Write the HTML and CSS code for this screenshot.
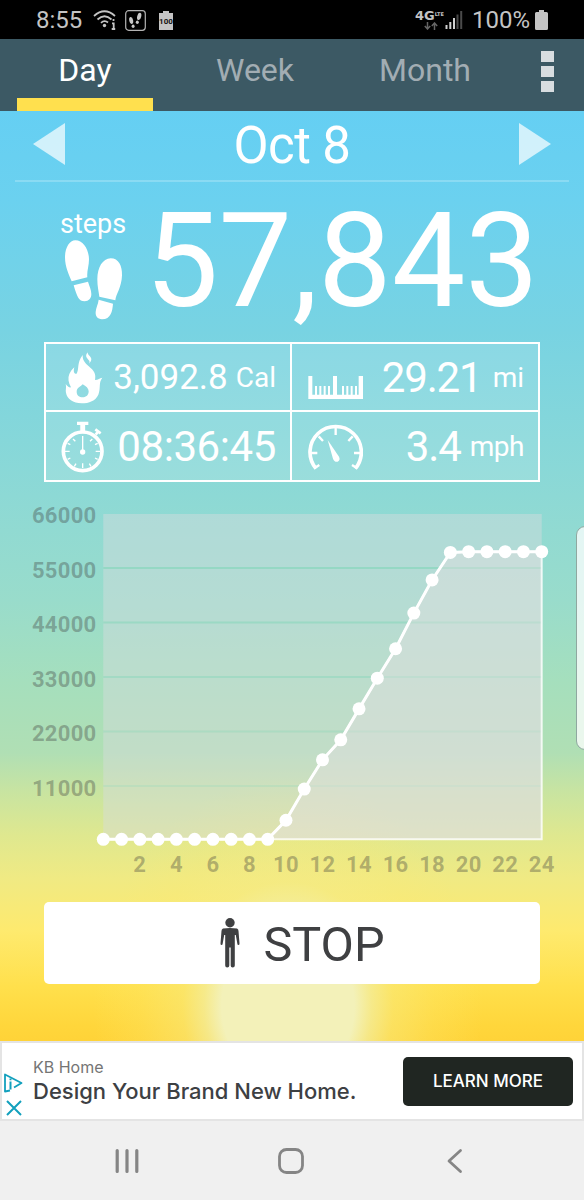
FILE: index.html
```html
<!DOCTYPE html>
<html lang="en">
<head>
    <meta charset="UTF-8">
    <meta name="viewport" content="width=device-width, initial-scale=1.0">
    <title>Pedometer</title>
    <link rel="stylesheet" href="styles.css">
</head>
<body>
    <!-- Phone status bar -->
    <div id="status-bar">
        <span class="clock">8:55</span>
        <svg class="wifi" width="24" height="22" viewBox="0 0 24 22" fill="none" stroke="#c4c4c4" stroke-width="1.8">
            <path d="M1 7 Q11.500 -2.500 22 7M4.500 10.500 Q11.500 4 18.500 10.500M8 13.800 Q11.500 10.500 15 13.500"/>
            <circle cx="11.500" cy="16.500" r="1.700" fill="#c4c4c4" stroke="none"/>
            <path d="M20.500 10v2M19 14.300h1.700v5.500M18.700 20h3.500"/>
        </svg>
        <svg class="steps-app" width="21" height="21" viewBox="0 0 21 21">
            <rect x=".7" y=".7" width="19.600" height="19.600" rx="3" fill="none" stroke="#b4b4b4" stroke-width="1.200"/>
            <g fill="#c8c8c8">
                <ellipse cx="6.200" cy="10.500" rx="1.900" ry="3.600" transform="rotate(-12 6.200 10.500)"/>
                <ellipse cx="8.100" cy="16.200" rx="1.500" ry="1.700"/>
                <ellipse cx="14.200" cy="6.400" rx="2" ry="3.700" transform="rotate(14 14.200 6.400)"/>
                <ellipse cx="12.300" cy="12.300" rx="1.500" ry="1.700"/>
            </g>
        </svg>
        <div class="battery-full">100</div>
        <div class="network">
            <span class="lte">4G<small>LTE</small></span>
            <svg width="14" height="8" viewBox="0 0 14 8" fill="none" stroke="#666" stroke-width="1.500">
                <path d="M3.500 0v7M.8 4l2.700 3 2.700-3M10.500 8V1M7.800 4l2.700-3 2.700 3"/>
            </svg>
        </div>
        <svg class="signal" width="18" height="18" viewBox="0 0 18 18">
            <path d="M.5 14h2v4h-2zM4.300 11h2v7h-2zM8 7h2v11H8z" fill="#d0d0d0"/>
            <path d="M11.500 3.500h2V18h-2zM15.200 0h2v18h-2z" fill="#4a4a4a"/>
        </svg>
        <span class="percent">100%</span>
        <svg class="battery" width="13" height="20" viewBox="0 0 13 20">
            <path d="M4 0h5v2h2.500q1.500 0 1.500 1.500v15Q13 20 11.500 20h-10Q0 20 0 18.500v-15Q0 2 1.500 2H4z" fill="#c4c4c4"/>
        </svg>
    </div>

    <!-- Tabs -->
    <div id="tabs">
        <div class="tab active">Day</div>
        <div class="tab">Week</div>
        <div class="tab">Month</div>
        <div class="menu"><i></i><i></i><i></i></div>
    </div>

    <div id="main">
        <div id="date-row">
            <svg width="32" height="42" viewBox="0 0 32 42"><path d="M32 0v42L0 21z"/></svg>
            <span>Oct 8</span>
            <svg width="32" height="42" viewBox="0 0 32 42"><path d="M0 0v42l32-21z"/></svg>
        </div>

        <div id="steps">
            <div class="steps-label">
                <span>steps</span>
                <svg width="66" height="84" viewBox="0 0 198 252" fill="#fff">
                    <path d="M35 130C28 112 15 88 15 58 15 30 28 7 46 7 70 7 87 36 87 64 87 84 80 100 82 118Z"/>
                    <path d="M41 142L84 131C88 145 94 155 94 168 94 182 86 189 74 190 56 190 52 178 41 142Z"/>
                    <path d="M118 176C116 160 112 145 112 124 112 88 128 62 152 61 176 61 187 84 186 112 185 148 168 168 166 187Z"/>
                    <path d="M116 185L159 197C157 220 153 243 126 244 112 243 106 234 107 222 108 208 114 200 116 185Z"/>
                </svg>
            </div>
            <div class="count">57,843</div>
        </div>

        <div id="stats">
            <div class="stat">
                <svg width="48" height="54" viewBox="0 0 144 162" fill="#fff">
                    <path fill-rule="evenodd" d="M14 102C20 110 24 113 30 112 22 98 20 84 25 72 29 64 32 60 40 52 36 66 40 72 46 72 56 58 46 40 65 15 64 34 76 42 88 53 104 66 104 78 102 90 112 90 116 84 124 83 112 98 120 114 112 134 104 152 84 160 62 160 36 159 18 146 15 128 13 118 17 114 14 102ZM65 103C60 110 47 113 47 125 47 136 55 142 65 142 76 142 83 135 83 124 83 115 75 108 65 103Z"/>
                    <path d="M80 7C72 17 76 23 82 29 87 33 86 37 84 41 95 30 91 23 86 18 81 14 80 11 80 7Z"/>
                </svg>
                <span class="value small">3,092.8</span><span class="unit">Cal</span>
            </div>
            <div class="stat">
                <svg class="ruler" width="56" height="26" viewBox="0 0 168 78" fill="#fff">
                    <path d="M4 3h12v56h62V3h12v56h65V3h13v69H4z"/>
                    <path d="M24 33h6v28h-6zM37 33h6v28h-6zM50 33h6v28h-6zM63 33h6v28h-6zM105 33h6v28h-6zM118 33h6v28h-6zM131 33h6v28h-6zM144 33h6v28h-6z"/>
                </svg>
                <span class="value narrow">29.21</span><span class="unit">mi</span>
            </div>
            <div class="stat">
                <svg width="48" height="56" viewBox="0 0 144 168" fill="none" stroke="#fff">
                    <circle cx="65" cy="100" r="58" stroke-width="11"/>
                    <path d="M48 16h34M65 18v24" stroke-width="10"/>
                    <path d="M58 20h14v20H58z" fill="#fff"/>
                    <path d="M104 50l8-10M103 34l16 12" stroke-width="8"/>
                    <path d="M65 54v44" stroke-width="4"/>
                    <circle cx="65" cy="102" r="8" fill="#fff" stroke="none"/>
                    <path d="M12 100h14M104 100h14M65 136v14M36 63l7 7M94 63l-7 7M20 76l8 4M110 76l-8 4M20 124l8-4M110 124l-8-4M40 145l5-8M90 145l-5-8" stroke-width="4"/>
                </svg>
                <span class="value">08:36:45</span>
            </div>
            <div class="stat">
                <svg class="gauge" width="56" height="48" viewBox="0 0 168 144" fill="none" stroke="#fff">
                    <path d="M27 134A77 77 0 1 1 145 134" stroke-width="11"/>
                    <path d="M10 87h21M162 87h-21M86 12v21M35 37l13 14M137 37l-13 14M23 132l14-9M149 132l-14-9" stroke-width="7"/>
                    <path d="M62 48L96 98Q101 108 92 113 82 115 78 104Z" fill="#fff" stroke="none"/>
                </svg>
                <span class="value narrow">3.4</span><span class="unit">mph</span>
            </div>
        </div>

        <svg id="chart" width="584" height="420" viewBox="0 0 584 420"></svg>

        <button id="stop">
            <svg width="22" height="50" viewBox="0 0 22 50" fill="#3f4042">
                <circle cx="11" cy="4.800" r="4.700"/>
                <path d="M4 10.500Q11 9.500 18 10.500 19.500 11 19.500 13L20.500 25.500Q20.500 27 19.500 27 18.400 27 18.300 25.500L16.800 17H15.800V47.500Q15.800 49.500 13.700 49.500 11.700 49.500 11.700 47.500V29.500H10.300V47.500Q10.300 49.500 8.200 49.500 6.200 49.500 6.200 47.500V17H5.200L3.700 25.500Q3.600 27 2.500 27 1.500 27 1.500 25.500L2.500 13Q2.500 11 4 10.500Z"/>
            </svg>
            <span>STOP</span>
        </button>

        <div id="edge-handle"></div>
    </div>

    <!-- Ad banner -->
    <div id="ad">
        <div class="ad-icons">
            <svg width="20" height="20" viewBox="0 0 20 20" fill="none" stroke="#12a0bd" stroke-width="1.800" stroke-linejoin="round">
                <path d="M7 17.500L2 18.500V1.500L18.500 10 11 14.500"/>
                <path d="M7.500 8.500v8M7.500 5.500v1.800" stroke-width="2"/>
            </svg>
            <svg width="20" height="16" viewBox="0 0 20 16" fill="none" stroke="#12a0bd" stroke-width="2">
                <path d="M3 1l14 14M17 1L3 15"/>
            </svg>
        </div>
        <div class="ad-text">
            <div class="advertiser">KB Home</div>
            <div class="headline">Design Your Brand New Home.</div>
        </div>
        <button class="learn-more">LEARN MORE</button>
    </div>

    <!-- Android navigation -->
    <div id="nav-bar">
        <svg width="26" height="26" viewBox="0 0 26 26" stroke="#858585" stroke-width="3.200" stroke-linecap="round">
            <path d="M3.200 2.500v21M13 2.500v21M22.800 2.500v21"/>
        </svg>
        <svg width="26" height="26" viewBox="0 0 26 26" fill="none" stroke="#858585" stroke-width="2.800">
            <rect x="1.500" y="1.500" width="23" height="23" rx="7"/>
        </svg>
        <svg width="26" height="26" viewBox="0 0 26 26" fill="none" stroke="#858585" stroke-width="2.800" stroke-linecap="round" stroke-linejoin="round">
            <path d="M18.500 2.500L7 13l11.500 10.500"/>
        </svg>
    </div>

    <script src="chart.js"></script>
</body>
</html>
```
FILE: styles.css
```css
/* General styles */
body {
    margin: 0;
    width: 584px;
    height: 1200px;
    overflow: hidden;
    font-family: Roboto, sans-serif;
    color: #fff;
    display: flex;
    flex-direction: column;
}

svg {
    display: block;
    flex-shrink: 0;
}

button {
    border: none;
    font-family: inherit;
    padding: 0;
    cursor: pointer;
}

/* Status bar */
#status-bar {
    height: 39px;
    background-color: #000;
    display: flex;
    align-items: center;
    color: #c4c4c4;
    font-size: 24px;
    box-sizing: border-box;
    padding: 1px 0 0 36px;
}

.clock {
    width: 57px;
}

.steps-app {
    margin-left: 8px;
}

.battery-full {
    width: 14px;
    height: 19px;
    margin: 1px 0 0 13px;
    background:
        linear-gradient(#c4c4c4, #c4c4c4) 4px 0 / 6px 2px no-repeat,
        linear-gradient(#c4c4c4, #c4c4c4) 0 2px / 14px 19px no-repeat;
    color: #111;
    font-size: 8px;
    font-weight: bold;
    line-height: 22px;
    display: flex;
    justify-content: center;
}

.network {
    margin-left: 243px;
    width: 27px;
    display: flex;
    flex-direction: column;
    align-items: center;
}

.network svg {
    margin-left: 2px;
}

.lte {
    display: flex;
    font-family: "DejaVu Sans", sans-serif;
    font-size: 13px;
    font-weight: bold;
    line-height: 11px;
    margin-bottom: 1px;
}

.lte small {
    font-size: 5px;
    line-height: 9px;
}

.signal {
    margin-left: 2px;
}

.percent {
    width: 63px;
    margin-left: 9px;
}

/* Tabs */
#tabs {
    height: 72px;
    background-color: #3c5964;
    display: flex;
    font-size: 32px;
    line-height: 62px;
    color: #a2adb3;
}

.tab {
    width: 136px;
    margin: 0 17px;
    height: 59px;
    text-align: center;
    border-bottom: 13px solid transparent;
}

.active {
    color: #fff;
    border-color: #ffe04e;
}

.menu {
    display: flex;
    flex-direction: column;
    gap: 4px;
    margin: 12px 0 0 31px;
}

.menu i {
    width: 13px;
    height: 11px;
    background-color: #d8dde0;
}

/* Sky background with the sun at the bottom */
#main {
    position: relative;
    height: 930px;
    background:
        radial-gradient(195px 230px at 288px 895px, #f3f1b9 0, #f3f1b9 34%, rgba(243, 238, 160, 0.75) 43%, rgba(248, 235, 130, 0.5) 54%, rgba(252, 234, 115, 0.25) 75%, rgba(252, 234, 115, 0) 100%),
        linear-gradient(#65cff3 0, #6bd1ef 90px, #78d3e2 220px, #8dd9d5 385px, #99dccb 490px, #a5dfbd 570px, #b0dfb4 642px, #c8e4a1 680px, #dfe88f 725px, #f0ea83 768px, #feea6e 820px, #ffe04c 875px, #ffd63b 915px, #ffd338 930px);
}

#date-row {
    height: 69px;
    margin: 0 15px;
    padding: 0 18px;
    border-bottom: 2px solid rgba(255, 255, 255, 0.22);
    display: flex;
    justify-content: space-between;
    align-items: center;
    font-size: 51px;
    letter-spacing: -0.6px;
}

#date-row svg {
    fill: rgba(255, 255, 255, 0.7);
    margin-bottom: 3px;
}

/* Step counter */
#steps {
    height: 160px;
    display: flex;
}

.steps-label {
    width: 66px;
    margin: 27px 0 0 60px;
    font-size: 27px;
    line-height: 31px;
}

.steps-label svg {
    margin-top: -2px;
}

.count {
    margin-left: 19px;
    font-size: 131px;
    line-height: 158px;
}

/* Stats table */
#stats {
    width: 492px;
    margin-left: 44px;
    border: 2px solid #fff;
    display: grid;
    grid-template-columns: 244px 246px;
    grid-template-rows: 66px 68px;
    gap: 2px;
    background:
        linear-gradient(#fff, #fff) 244px 0 / 2px 100% no-repeat,
        linear-gradient(#fff, #fff) 0 66px / 100% 2px no-repeat,
        rgba(255, 255, 255, 0.13);
}

.stat {
    display: flex;
    align-items: center;
    padding: 0 14px 0 15px;
}

.value {
    margin-left: auto;
    font-size: 42px;
    letter-spacing: -0.4px;
}

.value.small {
    font-size: 35px;
    letter-spacing: 0;
}

.value.narrow {
    letter-spacing: -1.1px;
}

.unit {
    margin-left: 8px;
    font-size: 28px;
}

.narrow + .unit {
    margin-left: 11px;
}

.gauge + .narrow + .unit {
    margin-left: 9px;
    letter-spacing: -0.5px;
}

.ruler {
    margin-top: 22px;
}

.gauge {
    margin-top: 4px;
}

/* Chart */
#chart text {
    font-size: 22px;
    font-weight: bold;
    letter-spacing: 0.3px;
    fill: rgba(60, 60, 60, 0.36);
}

/* Stop button */
#stop {
    width: 496px;
    height: 82px;
    margin-left: 44px;
    border-radius: 5px;
    background-color: #fff;
    color: #3f4042;
    font-size: 48.5px;
    display: flex;
    align-items: center;
    justify-content: center;
    gap: 22px;
    padding: 2px 0 0 20px;
}

#stop svg {
    margin-bottom: 2px;
}

#edge-handle {
    position: absolute;
    right: -12px;
    top: 415px;
    width: 18px;
    height: 222px;
    border: 1px solid #8fa8a0;
    border-radius: 9px;
    background-color: rgba(255, 255, 255, 0.75);
}

/* Ad banner */
#ad {
    height: 80px;
    box-sizing: border-box;
    border: 2px solid #e4e4e4;
    background-color: #fff;
    display: flex;
    align-items: center;
    font-family: Inter, sans-serif;
}

.ad-icons {
    width: 31px;
    margin-top: 27px;
}

.ad-icons svg {
    margin-left: 1px;
}

.ad-icons svg + svg {
    margin: 7px 0 0 2px;
}

.ad-text {
    width: 370px;
}

.advertiser {
    color: #757575;
    font-size: 16px;
    line-height: 20px;
}

.headline {
    color: #3d4043;
    font-size: 22px;
    font-weight: 500;
    line-height: 28px;
    white-space: nowrap;
}

.learn-more {
    width: 170px;
    height: 49px;
    border-radius: 5px;
    background-color: #202622;
    color: #fff;
    font-size: 17px;
    font-weight: 500;
}

/* Navigation bar */
#nav-bar {
    height: 79px;
    box-sizing: border-box;
    padding-right: 3px;
    background-color: #f0f0f0;
    display: flex;
    justify-content: center;
    align-items: center;
    gap: 138px;
}
```
FILE: chart.js
```javascript
// Hourly step totals
const steps = [0, 0, 0, 0, 0, 0, 0, 0, 0, 0, 3850, 10150, 16050, 20100, 26350, 32550, 38500, 45700, 52400, 57950, 58100, 58100, 58100, 58100, 58100];
const chart = document.getElementById('chart');
const left = 103.3;
const right = 541.7;
const top_ = 32;
const bottom = 357.3;

const x = hour => left + hour * (right - left) / 24;
const y = value => bottom - value * 217.8 / 44000;

let svg = `<rect x="${left}" y="${top_}" width="${right - left}" height="${bottom - top_}" fill="rgba(214, 220, 222, 0.45)"/>`;

// Grid lines and labels on the y axis
for (let i = 1; i <= 6; i++) {
    const lineY = 358.5 - i * 54.5;
    if (i < 6) {
        svg += `<line x1="${left}" y1="${lineY}" x2="${right}" y2="${lineY}" stroke="rgba(130, 214, 185, ${0.12 + i * 0.1})" stroke-width="2"/>`;
    }
    svg += `<text x="96.500" y="${368.5 - i * 54.6}" text-anchor="end">${i * 11000}</text>`;
}

for (let hour = 2; hour <= 24; hour += 2) {
    svg += `<text x="${x(hour)}" y="390" text-anchor="middle">${hour}</text>`;
}

const points = steps.map((value, hour) => `${x(hour)},${y(value)}`).join(' ');
svg += `<polygon points="${points} ${right},${bottom} ${left},${bottom}" fill="rgba(226, 224, 224, 0.45)" stroke="#fff" stroke-opacity="0.8" stroke-width="2"/>`;
svg += `<polyline points="${points}" fill="none" stroke="#fff" stroke-width="3"/>`;
steps.forEach((value, hour) => {
    svg += `<circle cx="${x(hour)}" cy="${y(value)}" r="6.500" fill="#fff"/>`;
});

chart.innerHTML = svg;
```
